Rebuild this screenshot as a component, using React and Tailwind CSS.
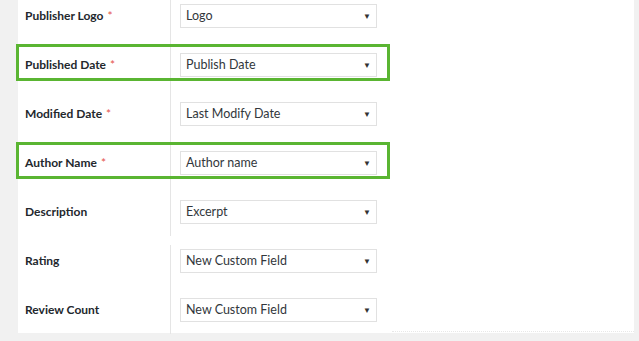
import React from "react";

const rows = [
  { label: "Publisher Logo", required: true, value: "Logo" },
  { label: "Published Date", required: true, value: "Publish Date", highlight: true },
  { label: "Modified Date", required: true, value: "Last Modify Date" },
  { label: "Author Name", required: true, value: "Author name", highlight: true },
  { label: "Description", required: false, value: "Excerpt" },
  { label: "Rating", required: false, value: "New Custom Field", gap: true },
  { label: "Review Count", required: false, value: "New Custom Field" },
];

const Row = ({ row }) => {
  return (
    <div className="relative flex h-[49px]">
      <div className="flex w-[152px] items-center pl-[7px] text-[12px] font-bold text-[#23282d]">
        {row.label}
        {row.required && <span className="ml-[4px] text-[12px] font-normal text-[#e5534b]">*</span>}
      </div>
      <div className="flex items-center pl-[10px] pt-[1px]">
        <div className="flex h-[24px] w-[197px] items-center justify-between border border-[#e1e1e1] pl-[5px] pr-[5px] text-[12.5px] text-[#32373c]">
          <span>{row.value}</span>
          <span className="text-[8px] text-[#333]">▼</span>
        </div>
      </div>
      <div
        className={`absolute left-[152px] w-px bg-[#e5e5e5] ${row.gap ? "top-[9px] bottom-0" : "top-0 bottom-0"}`}
      />
      {row.highlight && (
        <div className="absolute -left-[2px] top-[4px] h-[37px] w-[374px] border-[3px] border-[#5ab532]" />
      )}
    </div>
  );
};

const App = () => {
  return (
    <div
      className="h-[341px] w-[639px] overflow-hidden bg-[#f1f1f1]"
      style={{ fontFamily: 'Lato, "Open Sans", sans-serif' }}
    >
      <div className="flex h-[333px] w-[616px] ml-[18px] bg-white">
        <div className="w-[374px] -mt-[9px] pb-[3px]">
          {rows.map((row) => (
            <Row key={row.label} row={row} />
          ))}
        </div>
        <div className="flex-1 border-b border-dotted border-[#e8e8e8] mb-[1px]" />
      </div>
    </div>
  );
};

export default App;
